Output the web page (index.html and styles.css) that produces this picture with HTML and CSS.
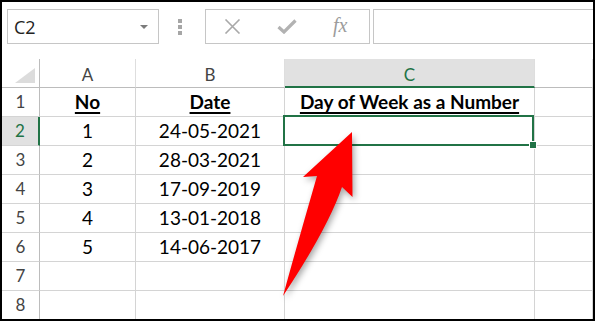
FILE: index.html
```html
<!DOCTYPE html>
<html lang="en">
<head>
    <meta charset="UTF-8">
    <meta name="viewport" content="width=device-width, initial-scale=1.0">
    <title>Day of Week as a Number</title>
    <link rel="stylesheet" href="styles.css">
</head>
<body>
    <div class="frame">

        <!-- Name box + formula bar -->
        <div class="formula-bar">
            <div class="name-box">
                <span class="cell-ref">C2</span>
                <svg class="caret" width="8" height="4" viewBox="0 0 8 4"><polygon points="0,0 8,0 4,4" fill="#7b7b7b"/></svg>
            </div>
            <div class="grip"><span></span><span></span><span></span></div>
            <div class="fn-box">
                <svg class="icon-cancel" width="17" height="15" viewBox="0 0 17 15"><path d="M1.5 0.5 L15.5 14.5 M15.5 0.5 L1.5 14.5" stroke="#a9a9a9" stroke-width="1.6" fill="none"/></svg>
                <svg class="icon-enter" width="20" height="15" viewBox="0 0 20 15"><path d="M1.5 8 L7 13 L18.5 1.5" stroke="#b2b2b2" stroke-width="3.2" fill="none"/></svg>
                <span class="fx">fx</span>
            </div>
            <div class="formula-input"></div>
        </div>

        <!-- Sheet grid -->
        <div class="sheet">
            <div class="cell corner">
                <svg width="37" height="28" viewBox="0 0 37 28"><polygon points="33,9 33,24 13,24" fill="#dcdcdc"/></svg>
            </div>
            <div class="cell col-head">A</div>
            <div class="cell col-head">B</div>
            <div class="cell col-head col-active">C</div>
            <div class="cell col-head"></div>

            <div class="cell row-head">1</div>
            <div class="cell hdr"><u>No</u></div>
            <div class="cell hdr"><u>Date</u></div>
            <div class="cell hdr"><u>Day of Week as a Number</u></div>
            <div class="cell"></div>

            <div class="cell row-head row-active">2</div>
            <div class="cell">1</div>
            <div class="cell">24-05-2021</div>
            <div class="cell active"><span class="selection"><span class="fill-handle"></span></span></div>
            <div class="cell"></div>

            <div class="cell row-head">3</div>
            <div class="cell">2</div>
            <div class="cell">28-03-2021</div>
            <div class="cell"></div>
            <div class="cell"></div>

            <div class="cell row-head">4</div>
            <div class="cell">3</div>
            <div class="cell">17-09-2019</div>
            <div class="cell"></div>
            <div class="cell"></div>

            <div class="cell row-head">5</div>
            <div class="cell">4</div>
            <div class="cell">13-01-2018</div>
            <div class="cell"></div>
            <div class="cell"></div>

            <div class="cell row-head">6</div>
            <div class="cell">5</div>
            <div class="cell">14-06-2017</div>
            <div class="cell"></div>
            <div class="cell"></div>

            <div class="cell row-head">7</div>
            <div class="cell"></div>
            <div class="cell"></div>
            <div class="cell"></div>
            <div class="cell"></div>

            <div class="cell row-head">8</div>
            <div class="cell"></div>
            <div class="cell"></div>
            <div class="cell"></div>
            <div class="cell"></div>
        </div>

        <!-- Callout arrow pointing at C2 -->
        <svg class="arrow" width="595" height="321" viewBox="0 0 595 321">
            <path d="M352 132 L352.5 197 L342 187 Q328 228 283 296 Q299 238 317 176 L303 177 Z" fill="#ff0000"/>
        </svg>

    </div>
</body>
</html>
```

FILE: styles.css
```css
/* Spreadsheet screenshot */

body {
    margin: 0;
    background: #fff;
    font-family: 'Lato', 'Liberation Sans', sans-serif;
}

.frame {
    position: relative;
    width: 595px;
    height: 321px;
    box-sizing: border-box;
    border: 2px solid #000;
    overflow: hidden;
    background: #fff;
}

/* ---- formula bar ---- */

.formula-bar {
    height: 57px;
    box-sizing: border-box;
    padding: 7px 0 0 5px;
    display: flex;
    align-items: flex-start;
}

.name-box {
    width: 152px;
    height: 35px;
    box-sizing: border-box;
    border: 1px solid #c6c6c6;
    display: flex;
    align-items: center;
    justify-content: space-between;
    padding: 0 10px 0 6px;
}

.cell-ref {
    font-family: 'Open Sans', sans-serif;
    font-size: 18px;
    color: #222;
    padding-top: 1px;
}

.caret {
    margin-top: 1px;
}

.grip {
    width: 46px;
    height: 35px;
    display: flex;
    flex-direction: column;
    align-items: center;
    justify-content: center;
    gap: 2px;
    padding-right: 4px;
    box-sizing: border-box;
}

.grip span {
    width: 4px;
    height: 4px;
    background: #a6a6a6;
}

.fn-box {
    width: 165px;
    height: 35px;
    box-sizing: border-box;
    border: 1px solid #c6c6c6;
    display: flex;
    align-items: center;
    padding-left: 18px;
    gap: 36px;
}

.fx {
    font-family: 'Liberation Serif', serif;
    font-style: italic;
    font-size: 20px;
    color: #9c9c9c;
    margin-left: 0;
    margin-top: -2px;
}

.formula-input {
    flex: 1;
    height: 35px;
    margin-left: 3px;
    box-sizing: border-box;
    border: 1px solid #c6c6c6;
    border-right: none;
}

/* ---- sheet ---- */

.sheet {
    display: grid;
    grid-template-columns: 38px 96px 149px 250px 1fr;
    grid-auto-rows: 29px;
}

.cell {
    box-sizing: border-box;
    border-right: 1px solid #d4d4d4;
    border-bottom: 1px solid #d4d4d4;
    display: flex;
    justify-content: center;
    line-height: 28px;
    font-size: 19px;
    color: #000;
}

.corner {
    border-right-color: #bcbcbc;
    border-bottom-color: #bcbcbc;
}

.col-head {
    font-size: 17px;
    color: #444;
    padding-top: 2px;
    border-right-color: #dedede;
    border-bottom-color: #bcbcbc;
}

.col-active {
    background: #e1e1e1;
    color: #217346;
    border-bottom: 2px solid #217346;
}

.row-head {
    font-size: 17px;
    color: #444;
    border-right-color: #bcbcbc;
}

.row-active {
    background: #e1e1e1;
    color: #217346;
    border-right: 2px solid #217346;
}

.hdr {
    font-weight: bold;
}

.hdr u {
    text-decoration-thickness: 2px;
    text-underline-offset: 3px;
}

.active {
    position: relative;
}

.selection {
    position: absolute;
    left: -2px;
    top: -2px;
    right: 0;
    bottom: -1px;
    border: 2px solid #217346;
}

.fill-handle {
    position: absolute;
    right: -5px;
    bottom: -5px;
    width: 6px;
    height: 6px;
    background: #217346;
    border: 1px solid #fff;
}

.arrow {
    position: absolute;
    left: -2px;
    top: -2px;
    pointer-events: none;
    filter: drop-shadow(2px 3px 3px rgba(0, 0, 0, 0.35));
}
```
